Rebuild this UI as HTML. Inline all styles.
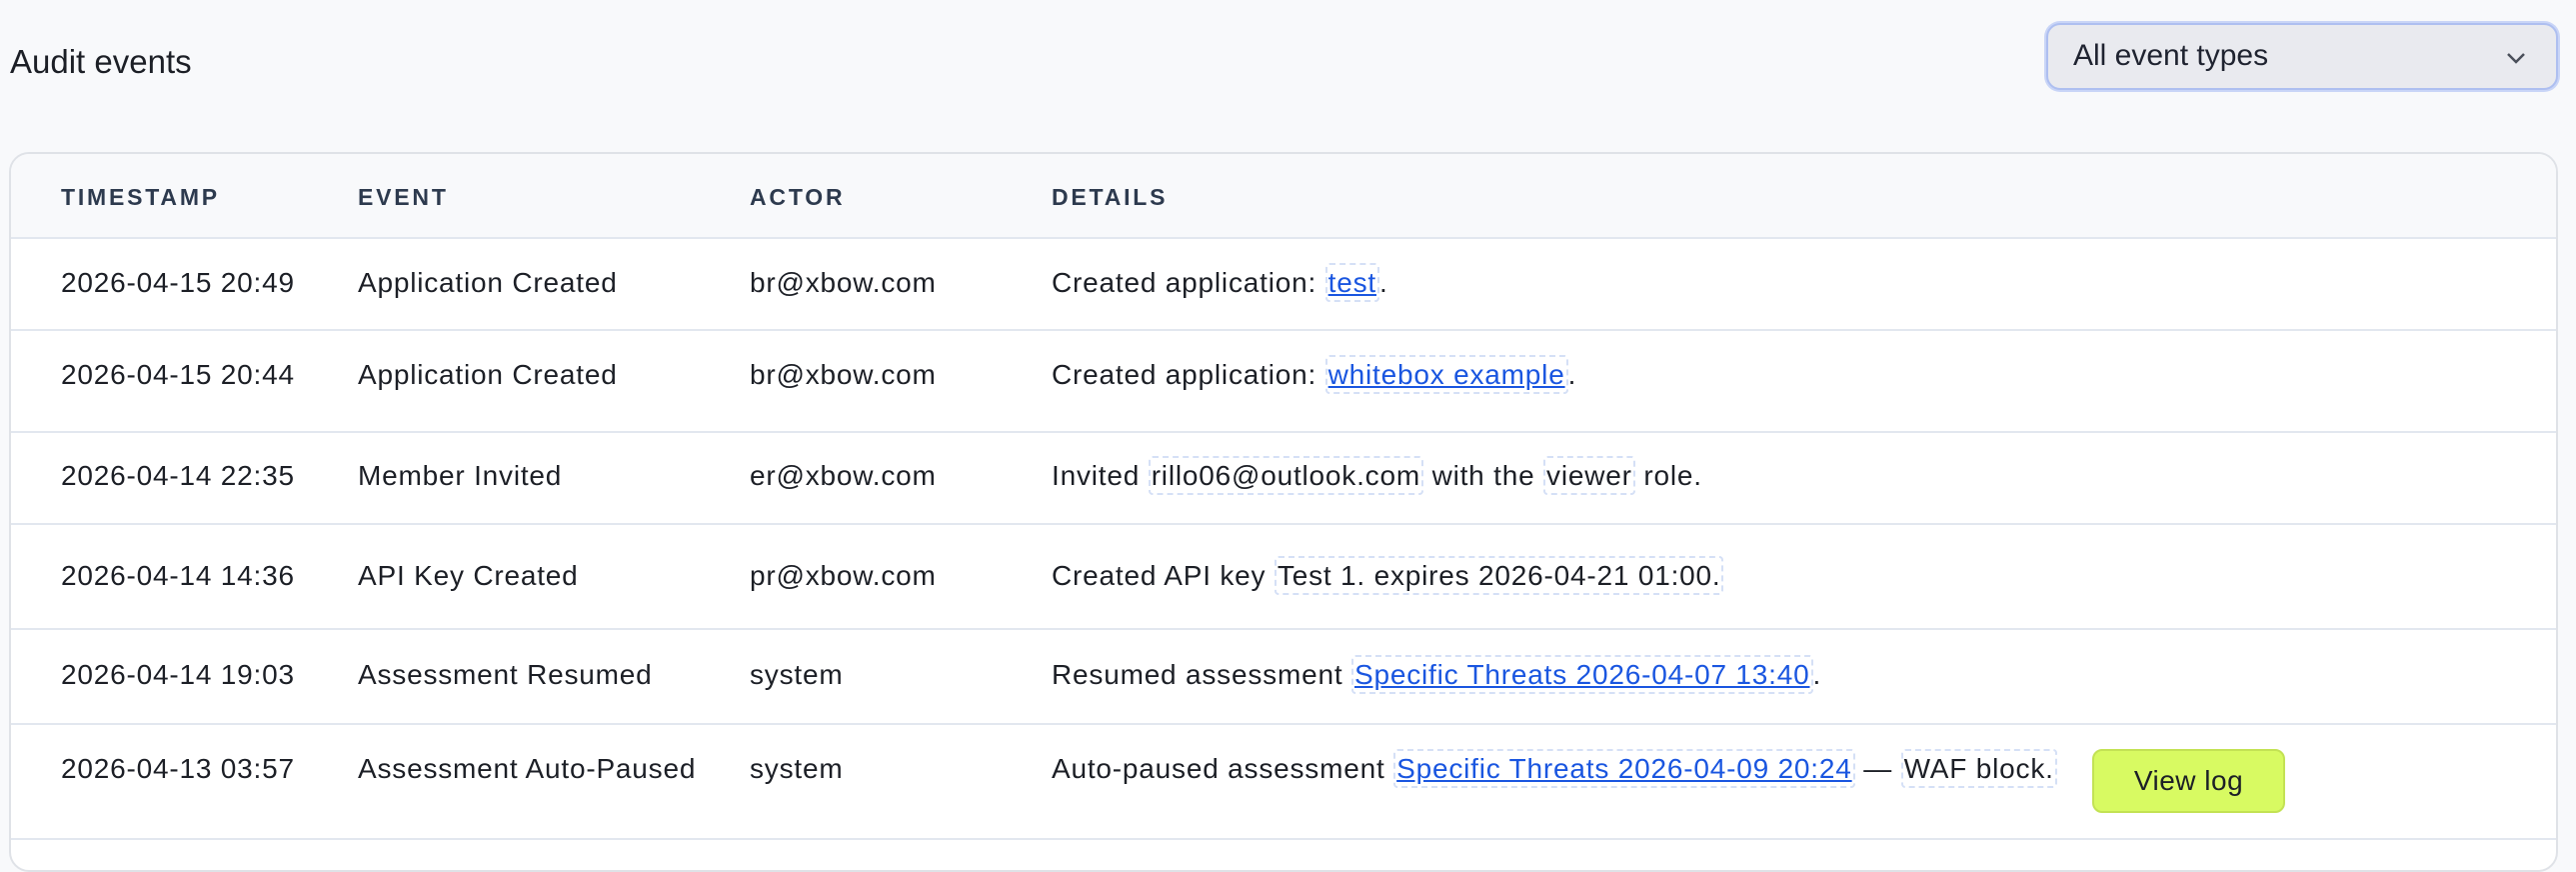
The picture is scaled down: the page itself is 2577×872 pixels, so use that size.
<!DOCTYPE html>
<html><head><meta charset="utf-8"><style>
*{box-sizing:border-box;margin:0;padding:0}
body{width:2577px;height:855px;background:#f8f9fb;font-family:"Liberation Sans",sans-serif;color:#1c1f26;position:relative;overflow:hidden}
.title{position:absolute;left:10px;top:43px;font-size:33px;color:#1c1f26}
.sel{position:absolute;left:2047px;top:23px;width:512px;height:67px;background:#e9eaef;border:2px solid #aebff0;box-shadow:0 0 0 2px #c9d5f7;border-radius:14px}
.sel span{position:absolute;left:25px;top:14px;font-size:30px;color:#1f2330}
.sel svg{position:absolute;right:30px;top:26px}
.card{position:absolute;left:9px;top:152px;width:2550px;height:720px;background:#fff;border:2px solid #dfe2e7;border-radius:20px;overflow:hidden}
.hd{position:absolute;left:0;top:0;width:100%;height:85px;background:#f8f9fb;border-bottom:2px solid #e2e7ef}
.hd div{position:absolute;top:30px;font-size:23px;font-weight:bold;letter-spacing:2.8px;color:#2d3a4e}
.row{position:absolute;left:0;width:100%;border-bottom:2px solid #e2e7ef}
.row div{position:absolute;font-size:28px;letter-spacing:0.8px;line-height:40px;white-space:nowrap}
.c1{left:50px}.c2{left:347px}.c3{left:739px}.c4{left:1041px}
.d{border:2px dashed #d5e0f6;border-radius:4px;padding:2px 1px}
a{color:#1a56e0;text-decoration:underline}
.row div.btn{left:2082px;top:24px;width:193px;height:64px;background:#d8fa62;border:2px solid #c3e254;border-radius:10px;font-size:28px;text-align:center;line-height:60px;color:#1c1f26;letter-spacing:0.5px}
</style></head><body>
<div class="title">Audit events</div>
<div class="sel"><span>All event types</span><svg width="20" height="14" viewBox="0 0 20 14"><path d="M2 3l8 8 8-8" fill="none" stroke="#4a4f5a" stroke-width="2.5"/></svg></div>
<div class="card">
<div class="hd"><div style="left:50px">TIMESTAMP</div><div style="left:347px">EVENT</div><div style="left:739px">ACTOR</div><div style="left:1041px">DETAILS</div></div>
<div class="row" style="top:85px;height:92px"><div class="c1" style="top:24px">2026-04-15 20:49</div><div class="c2" style="top:24px">Application Created</div><div class="c3" style="top:24px">br@xbow.com</div><div class="c4" style="top:24px">Created application: <a class="d">test</a>.</div></div>
<div class="row" style="top:177px;height:102px"><div class="c1" style="top:24px">2026-04-15 20:44</div><div class="c2" style="top:24px">Application Created</div><div class="c3" style="top:24px">br@xbow.com</div><div class="c4" style="top:24px">Created application: <a class="d">whitebox example</a>.</div></div>
<div class="row" style="top:279px;height:92px"><div class="c1" style="top:23px">2026-04-14 22:35</div><div class="c2" style="top:23px">Member Invited</div><div class="c3" style="top:23px">er@xbow.com</div><div class="c4" style="top:23px">Invited <span class="d">rillo06@outlook.com</span> with the <span class="d">viewer</span> role.</div></div>
<div class="row" style="top:371px;height:105px"><div class="c1" style="top:31px">2026-04-14 14:36</div><div class="c2" style="top:31px">API Key Created</div><div class="c3" style="top:31px">pr@xbow.com</div><div class="c4" style="top:31px">Created API key <span class="d">Test 1. expires 2026-04-21 01:00.</span></div></div>
<div class="row" style="top:476px;height:95px"><div class="c1" style="top:25px">2026-04-14 19:03</div><div class="c2" style="top:25px">Assessment Resumed</div><div class="c3" style="top:25px">system</div><div class="c4" style="top:25px">Resumed assessment <a class="d">Specific Threats 2026-04-07 13:40</a>.</div></div>
<div class="row" style="top:571px;height:115px"><div class="c1" style="top:24px">2026-04-13 03:57</div><div class="c2" style="top:24px">Assessment Auto-Paused</div><div class="c3" style="top:24px">system</div><div class="c4" style="top:24px">Auto-paused assessment <a class="d">Specific Threats 2026-04-09 20:24</a> — <span class="d">WAF block.</span></div><div class="btn">View log</div></div>
</div>
</body></html>
